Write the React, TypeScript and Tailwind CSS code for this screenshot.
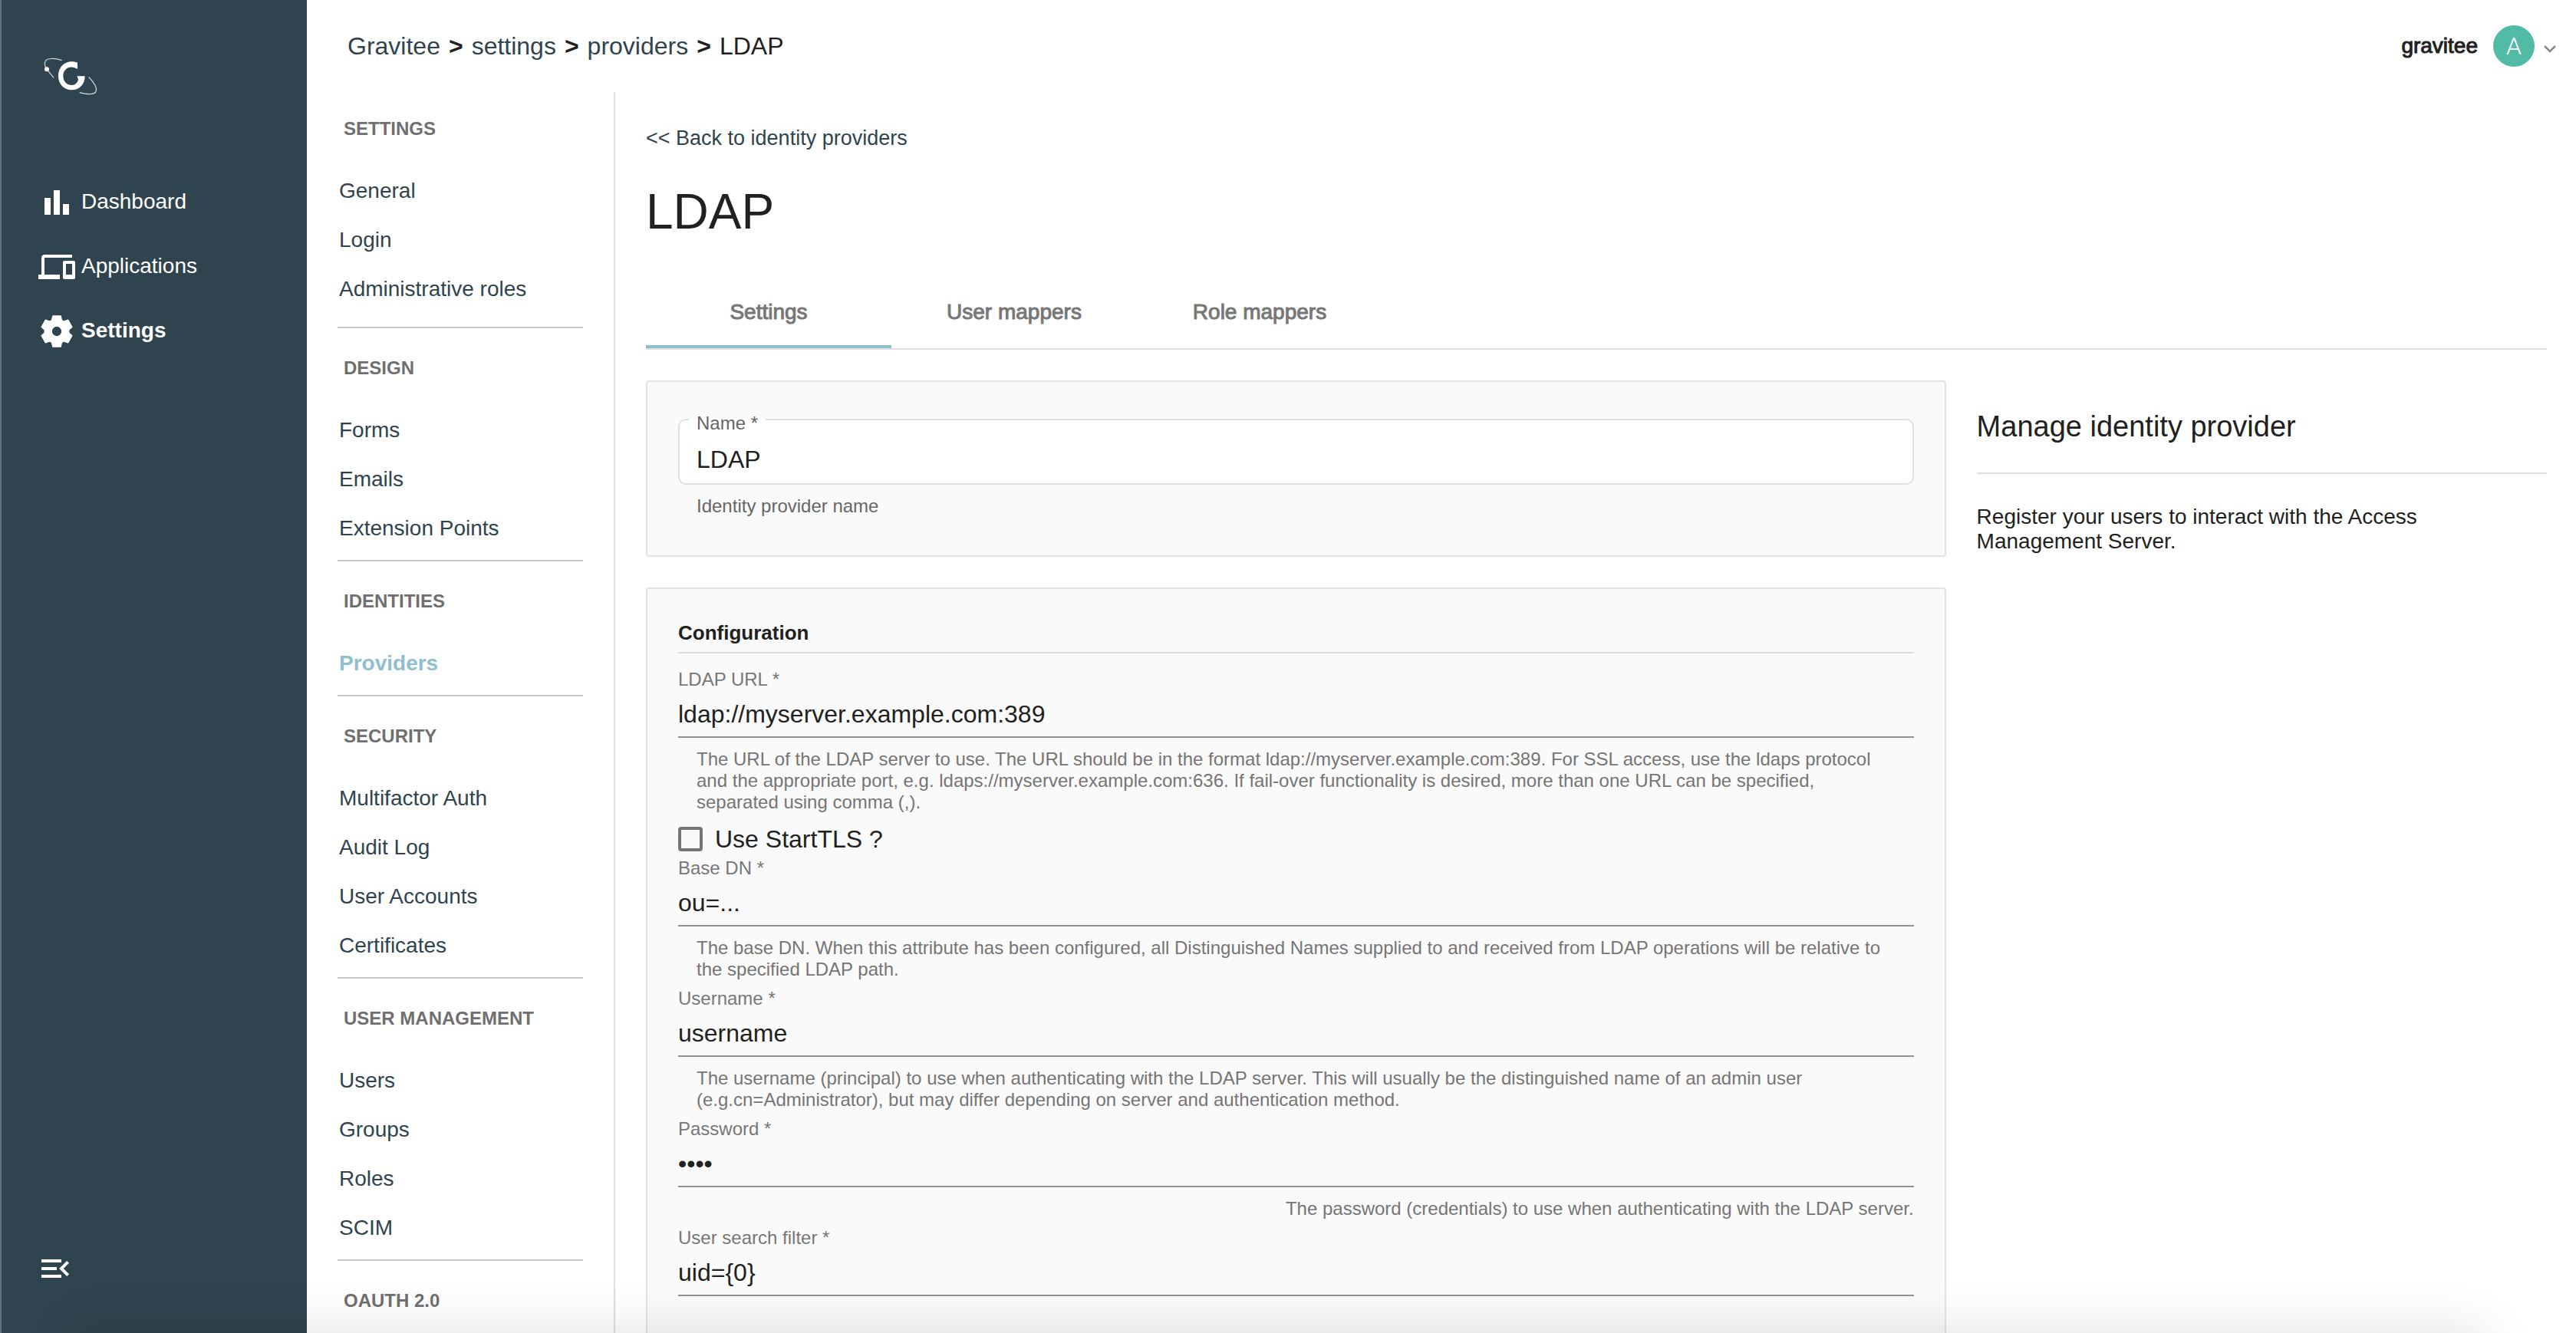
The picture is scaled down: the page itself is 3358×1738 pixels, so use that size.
import type { ReactNode } from "react";
import { MdBarChart, MdDevices, MdMenuOpen } from "react-icons/md";

type MenuSection = { title: string; items: string[] };

const MENU: MenuSection[] = [
  { title: "SETTINGS", items: ["General", "Login", "Administrative roles"] },
  { title: "DESIGN", items: ["Forms", "Emails", "Extension Points"] },
  { title: "IDENTITIES", items: ["Providers"] },
  { title: "SECURITY", items: ["Multifactor Auth", "Audit Log", "User Accounts", "Certificates"] },
  { title: "USER MANAGEMENT", items: ["Users", "Groups", "Roles", "SCIM"] },
  { title: "OAUTH 2.0", items: [] },
];

function Logo() {
  return (
    <svg viewBox="165 215 225 165" className="h-[55px] w-[75px]" aria-label="Gravitee" role="img">
      <path
        fill="#fff"
        d="M303 244C270 230 228 248 228 296C228 330 252 351 280 351C312 351 332 328 332 297L301 297L306 309C304 323 294 332 281 332C262 332 247 318 247 296C247 266 276 251 303 269Z"
      />
      <circle cx="183" cy="270" r="9" fill="#fff" />
      <g fill="none" stroke="#fff" strokeOpacity="0.8" strokeWidth="3.5">
        <path d="M242 235C215 226 186 226 179 236C172 246 176 262 183 270L210 303" />
        <path d="M347 300C368 322 379 342 376 354C372 369 345 370 311 361" />
      </g>
    </svg>
  );
}

function Gear() {
  return (
    <svg viewBox="-72 -72 144 144" className="size-12" aria-hidden="true">
      <path
        fill="#fff"
        fillRule="evenodd"
        stroke="#fff"
        strokeWidth="5"
        strokeLinejoin="round"
        d="M-15-60L15-60L19-43L28-38L44-44L59-17L47-6L47 6L59 17L44 44L28 38L19 43L15 60L-15 60L-19 43L-28 38L-44 44L-59 17L-47 6L-47-6L-59-17L-44-44L-28-38L-19-43ZM21 0A21 21 0 1 0-21 0A21 21 0 1 0 21 0Z"
      />
    </svg>
  );
}

function SideLink({ icon, label, active }: { icon: ReactNode; label: string; active?: boolean }) {
  return (
    <a
      href="#"
      className={`flex h-[84px] items-center gap-2 pl-12 text-[28px] leading-8 ${active ? "font-bold" : "font-normal"}`}
    >
      {icon}
      <span className="pb-0.5">{label}</span>
    </a>
  );
}

function Sidebar() {
  return (
    <aside className="flex w-[400px] shrink-0 flex-col border-l-2 border-[#5f7379] bg-[#2f444e] text-white">
      <div className="h-[222px] pt-[72px] pl-[53px]">
        <Logo />
      </div>
      <nav className="flex flex-col">
        <SideLink icon={<MdBarChart className="size-12" />} label="Dashboard" />
        <SideLink icon={<MdDevices className="size-12" />} label="Applications" />
        <SideLink icon={<Gear />} label="Settings" active />
      </nav>
      <button type="button" aria-label="Collapse menu" className="mt-auto mb-[60px] ml-[46px] self-start">
        <MdMenuOpen className="size-12" />
      </button>
    </aside>
  );
}

function Header() {
  const sep = <span className="font-bold text-[#212121]">&gt;</span>;
  return (
    <header className="flex h-[120px] shrink-0 items-center justify-between pr-[26px] pl-[53px]">
      <nav aria-label="Breadcrumb" className="flex items-center gap-[11px] text-[32px] leading-10 text-[#2f444e]">
        <a href="#">Gravitee</a>
        {sep}
        <a href="#">settings</a>
        {sep}
        <a href="#">providers</a>
        {sep}
        <span className="text-[#212121]">LDAP</span>
      </nav>
      <button type="button" className="flex items-center text-[28px] leading-8 text-[#212121]">
        <span className="[-webkit-text-stroke:1px_currentColor]">gravitee</span>
        <span className="ml-5 flex size-[54px] items-center justify-center rounded-full bg-[#52bba5] font-['Roboto',sans-serif] text-[32px] font-light text-white">
          A
        </span>
        <svg viewBox="0 0 16 10" className="mt-2 ml-3 h-[10px] w-4" aria-hidden="true">
          <path d="M1 1L8 8L15 1" fill="none" stroke="#888" strokeWidth="2.5" />
        </svg>
      </button>
    </header>
  );
}

function SettingsMenu() {
  return (
    <nav aria-label="Settings" className="w-[402px] shrink-0 overflow-hidden border-r-2 border-[#dedede] px-10">
      {MENU.map((section, i) => (
        <section key={section.title}>
          {i > 0 && <hr className={`mb-1 border-t-2 border-[#cacaca] ${i === 1 ? "mt-[18px]" : "mt-[10px]"}`} />}
          <h2 className="flex h-24 items-center pl-2 text-2xl font-bold text-[#6f6f6f]">{section.title}</h2>
          <ul>
            {section.items.map((item) => (
              <li key={item}>
                <a
                  href="#"
                  className={`flex h-16 items-center pt-0.5 pl-0.5 text-[28px] leading-8 ${
                    item === "Providers" ? "font-bold text-[#8fbfcd]" : "text-[#2f444e]"
                  }`}
                >
                  {item}
                </a>
              </li>
            ))}
          </ul>
        </section>
      ))}
    </nav>
  );
}

function Helper({ children }: { children: ReactNode }) {
  return <p className="mt-[14px] px-6 text-2xl leading-7 text-[#757575]">{children}</p>;
}

function Field({
  id,
  label,
  value,
  type = "text",
  children,
}: {
  id: string;
  label: string;
  value: string;
  type?: string;
  children?: ReactNode;
}) {
  return (
    <div className="mb-[10px]">
      <label htmlFor={id} className="block text-2xl leading-7 text-[#777]">
        {label} *
      </label>
      <input
        id={id}
        type={type}
        defaultValue={value}
        className="block h-[62px] w-full border-b-2 border-[#919191] bg-transparent pt-0.5 text-[32px] text-[#212121] outline-none"
      />
      {children}
    </div>
  );
}

function Tabs() {
  const tabs = ["Settings", "User mappers", "Role mappers"];
  return (
    <div role="tablist" className="mt-[46px] flex border-b-2 border-[#e0e0e0]">
      {tabs.map((tab, i) => (
        <button
          key={tab}
          type="button"
          role="tab"
          aria-selected={i === 0}
          className={`relative h-24 w-80 pt-0.5 text-[28px] text-[#777] [-webkit-text-stroke:1px_currentColor] ${
            i === 0 ? "after:absolute after:inset-x-0 after:bottom-0 after:h-1 after:bg-[#8fbfcd]" : ""
          }`}
        >
          {tab}
        </button>
      ))}
    </div>
  );
}

function NameCard() {
  return (
    <section className="rounded border-2 border-[#e3e3e3] bg-[#fafafa] px-10 pt-12 pb-[50px]">
      <div className="relative rounded-[10px] border-2 border-[#e0e0e0] bg-white">
        <label
          htmlFor="name"
          className="absolute -top-0.5 left-3 border-t-2 border-white px-[10px] text-2xl leading-2 text-[#666]"
        >
          Name *
        </label>
        <input
          id="name"
          defaultValue="LDAP"
          className="block h-[82px] w-full bg-transparent px-[22px] pt-5 text-[32px] text-[#212121] outline-none"
        />
      </div>
      <p className="mt-[14px] px-6 text-2xl leading-7 text-[#666]">Identity provider name</p>
    </section>
  );
}

function ConfigurationCard() {
  return (
    <section className="mt-10 rounded border-2 border-[#e3e3e3] bg-[#fafafa] p-10">
      <h2 className="mb-5 border-b-2 border-[#dcdcdc] pb-2 text-[26px] leading-[34px] font-bold text-[#212121]">
        Configuration
      </h2>
      <Field id="url" label="LDAP URL" value="ldap://myserver.example.com:389">
        <Helper>
          The URL of the LDAP server to use. The URL should be in the format ldap://myserver.example.com:389. For SSL
          access, use the ldaps protocol and the appropriate port, e.g. ldaps://myserver.example.com:636. If fail-over
          functionality is desired, more than one URL can be specified, separated using comma (,).
        </Helper>
      </Field>
      <label className="flex h-12 items-center gap-4 text-[32px] text-[#212121]">
        <input
          type="checkbox"
          className="size-8 appearance-none rounded border-4 border-[#757575] checked:bg-[#757575]"
        />
        Use StartTLS ?
      </label>
      <Field id="base-dn" label="Base DN" value="ou=...">
        <Helper>
          The base DN. When this attribute has been configured, all Distinguished Names supplied to and received from
          LDAP operations will be relative to the specified LDAP path.
        </Helper>
      </Field>
      <Field id="username" label="Username" value="username">
        <Helper>
          The username (principal) to use when authenticating with the LDAP server. This will usually be the
          distinguished name of an admin user (e.g.cn=Administrator), but may differ depending on server and
          authentication method.
        </Helper>
      </Field>
      <Field id="password" label="Password" value="pass" type="password">
        <p className="mt-[14px] text-right text-2xl leading-7 text-[#757575]">
          The password (credentials) to use when authenticating with the LDAP server.
        </p>
      </Field>
      <Field id="filter" label="User search filter" value="uid={0}" />
    </section>
  );
}

export default function App() {
  return (
    <div className="relative flex h-screen overflow-hidden bg-white font-['Liberation_Sans',Arial,sans-serif]">
      <Sidebar />
      <div className="flex min-w-0 flex-1 flex-col">
        <Header />
        <div className="flex min-h-0 flex-1">
          <SettingsMenu />
          <main className="min-w-0 flex-1 overflow-hidden pt-10 pr-[38px] pl-10">
            <a href="#" className="block text-[27px] leading-10 text-[#2f444e]">
              &lt;&lt; Back to identity providers
            </a>
            <h1 className="mt-10 text-[64px] leading-[72px] text-[#212121]">LDAP</h1>
            <Tabs />
            <div className="mt-10 flex">
              <div className="w-7/10 shrink-0 pr-10">
                <NameCard />
                <ConfigurationCard />
              </div>
              <aside className="min-w-0 flex-1 pt-10 text-[#212121]">
                <h2 className="border-b-2 border-[#e0e0e0] pb-10 text-[38px] leading-10">Manage identity provider</h2>
                <p className="pt-10 text-[28px] leading-8">
                  Register your users to interact with the Access Management Server.
                </p>
              </aside>
            </div>
          </main>
        </div>
      </div>
      {/* soft shadow rising from the lower window edge */}
      <div className="pointer-events-none absolute top-full right-[120px] left-[100px] h-40 shadow-[0_0_70px_rgba(0,0,0,0.13)]" />
    </div>
  );
}
